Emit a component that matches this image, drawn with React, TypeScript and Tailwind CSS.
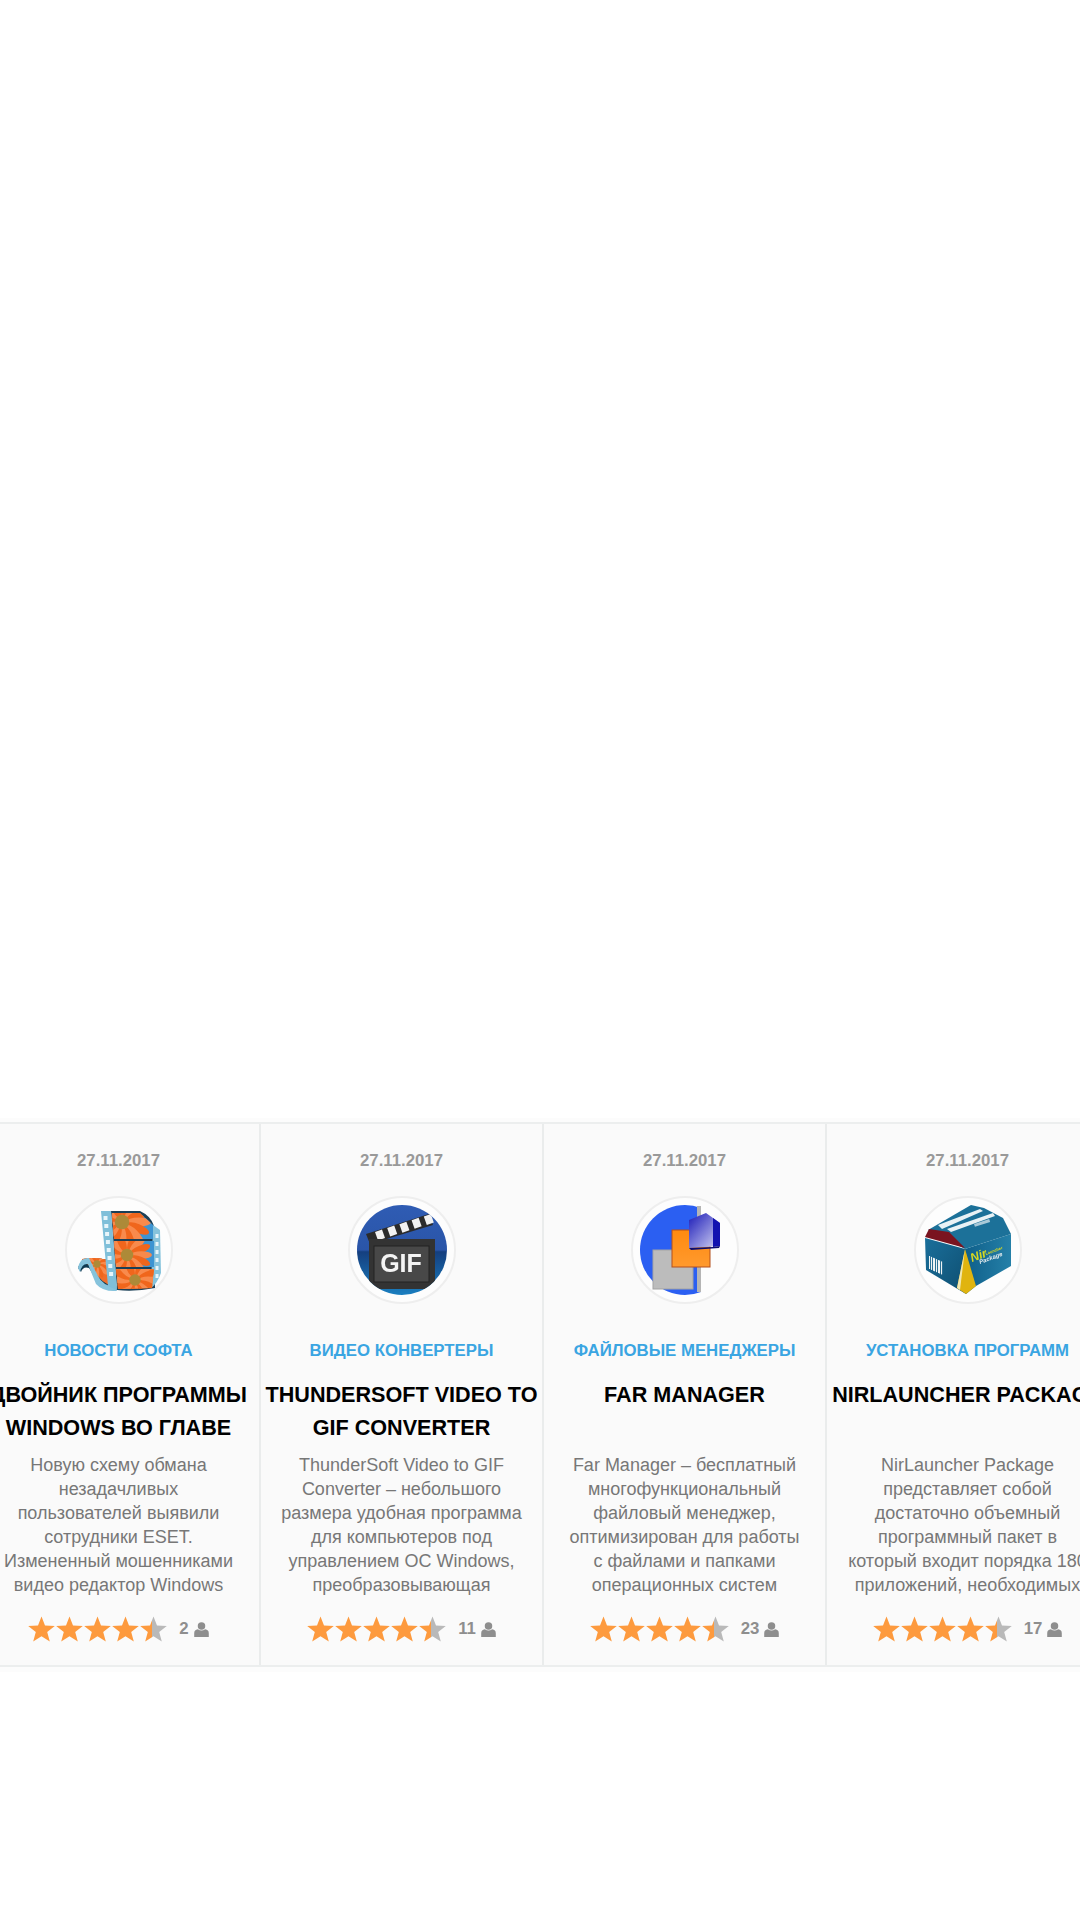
import React from "react";

function Flower({ cx, cy, r }: { cx: number; cy: number; r: number }) {
  const petals = Array.from({ length: 16 }, (_, i) => (i * 360) / 16);
  return (
    <g>
      <circle cx={cx} cy={cy} r={r * 0.72} fill="#ee651c" />
      {petals.map((a, i) => (
        <ellipse key={a} cx={cx} cy={cy - r * 0.6} rx={r * 0.16} ry={r * 0.44} fill={i % 2 ? "#f0661c" : "#f88a4c"} transform={`rotate(${a} ${cx} ${cy})`} />
      ))}
      <circle cx={cx} cy={cy} r={r * 0.26} fill="#ad8a38" />
    </g>
  );
}

function FilmIcon() {
  return (
    <svg viewBox="0 0 108 108" className="h-full w-full">
      <defs>
        <clipPath id="f1"><polygon points="47,17 75,17 88,29 88,43 49,43" /></clipPath>
        <clipPath id="f2"><polygon points="49,45 89,45 89,71 51,71" /></clipPath>
        <clipPath id="f3"><polygon points="51,73 89,73 87,92 53,93" /></clipPath>
        <clipPath id="filmLow">
          <path d="M17 63 Q30 60 46 65 L50 91 Q36 88 29 74 Q24 66 17 68 Z" />
        </clipPath>
      </defs>
      <path d="M46 15 L75 15 Q86 20 89 30 L90 92 Q70 96 52 94 Z" fill="#1a3f56" />
      <path d="M13 72 Q16 62 30 62 L46 64 L52 94 Q38 95 33 88 Q28 78 24 72 Q18 70 16 76 Z" fill="#0f3a52" />
      <g clipPath="url(#filmLow)">
        <rect x="10" y="58" width="45" height="40" fill="#ef6d2a" />
        <Flower cx={32} cy={68} r={14} />
      </g>
      <path d="M13 72 Q15 61 24 62 Q28 70 33 80 Q38 90 50 91 L52 95 Q38 96 31 88 Q26 76 23 68 Q17 67 15 76 Z" fill="#86c3dc" />
      <path d="M88 29 L95 34 L96 77 Q92 88 86 92 Z" fill="#86c3dc" />
      <g clipPath="url(#f1)">
        <rect x="45" y="16" width="46" height="30" fill="#3d94d2" />
        <Flower cx={57} cy={26} r={28} />
      </g>
      <g clipPath="url(#f2)">
        <rect x="45" y="44" width="46" height="30" fill="#3d94d2" />
        <Flower cx={62} cy={59} r={24} />
      </g>
      <g clipPath="url(#f3)">
        <rect x="45" y="72" width="46" height="24" fill="#ee7a30" />
        <Flower cx={70} cy={84} r={22} />
      </g>
      <path d="M36 15 L46 15 L52 94 L43 90 Z" fill="#7fbfd9" />
      {[20, 28, 36, 44, 52, 60, 68, 76].map((y, i) => (
        <rect key={y} x={38.5 + i * 0.8} y={y} width="4" height="4" fill="#e8f5fa" />
      ))}
      {[38, 46, 54, 62, 70, 78].map((y) => (
        <rect key={y} x="90.5" y={y} width="3" height="4" fill="#e8f5fa" />
      ))}
    </svg>
  );
}

function GifIcon() {
  return (
    <svg viewBox="0 0 108 108" className="h-full w-full">
      <defs>
        <linearGradient id="gifBg" x1="0" y1="0" x2="0" y2="1">
          <stop offset="0%" stopColor="#2f5cb4" />
          <stop offset="50%" stopColor="#2a55a8" />
          <stop offset="52%" stopColor="#153f7f" />
          <stop offset="100%" stopColor="#1a7fc0" />
        </linearGradient>
        <clipPath id="gifClip">
          <circle cx="54" cy="54" r="45" />
        </clipPath>
      </defs>
      <circle cx="54" cy="54" r="45" fill="url(#gifBg)" />
      <g clipPath="url(#gifClip)">
        <polygon points="18,38 81,18 85,29 22,48" fill="#2b2b2b" />
        {[0, 1, 2, 3, 4].map((i) => (
          <polygon key={i} points={`${27 + i * 12.2},${36 - i * 3.9} ${34 + i * 12.2},${33.5 - i * 3.9} ${37 + i * 12.2},${42 - i * 3.9} ${30 + i * 12.2},${44.5 - i * 3.9}`} fill="#f2f2f2" />
        ))}
        <rect x="21" y="43" width="66" height="50" fill="#333333" />
        <rect x="26" y="50" width="55" height="36" fill="#484848" stroke="#222222" strokeWidth="1" />
      </g>
      <text x="53" y="76" textAnchor="middle" fontFamily="Liberation Sans" fontWeight="700" fontSize="25" fill="#f4f4f4">GIF</text>
    </svg>
  );
}

function FarIcon() {
  return (
    <svg viewBox="0 0 108 108" className="h-full w-full">
      <defs>
        <clipPath id="farClip">
          <rect x="0" y="0" width="70" height="108" />
        </clipPath>
        <linearGradient id="farOrange" x1="0" y1="0" x2="0" y2="1">
          <stop offset="0%" stopColor="#ff8a10" />
          <stop offset="100%" stopColor="#ff9a2e" />
        </linearGradient>
        <linearGradient id="farCube" x1="0" y1="0" x2="1" y2="1">
          <stop offset="0%" stopColor="#1a1ab8" />
          <stop offset="100%" stopColor="#d8d8f5" />
        </linearGradient>
      </defs>
      <g clipPath="url(#farClip)">
        <circle cx="54" cy="54" r="45" fill="#2b5ff2" />
        <rect x="66" y="10" width="5" height="86" fill="#b5b5b5" />
      </g>
      <rect x="22" y="54" width="40" height="39" fill="#bcbcbc" stroke="#a3a3a3" strokeWidth="1" />
      <rect x="41" y="34" width="38" height="37" fill="url(#farOrange)" stroke="#b4501c" strokeWidth="1" />
      <polygon points="58,24 75,17 89,27 89,50 58,52" fill="url(#farCube)" />
      <polygon points="82,22 89,27 89,50 82,51" fill="#1212b0" />
      <polygon points="58,52 82,51 89,50 88,52 60,54" fill="#0c0c70" />
    </svg>
  );
}

function BoxIcon() {
  return (
    <svg viewBox="0 0 108 108" className="h-full w-full">
      <defs>
        <linearGradient id="boxL" x1="0" y1="0" x2="1" y2="1">
          <stop offset="0%" stopColor="#1a6f9b" />
          <stop offset="100%" stopColor="#0e4e70" />
        </linearGradient>
        <linearGradient id="boxR" x1="0" y1="0" x2="1" y2="0">
          <stop offset="0%" stopColor="#0f5f8a" />
          <stop offset="100%" stopColor="#2580a8" />
        </linearGradient>
      </defs>
      <polygon points="51,53 97,38 97,70 62,90 52,98" fill="url(#boxR)" />
      <polygon points="14,34 57,9 70,12 89,22 97,38 51,53" fill="#1c7199" />
      <polygon points="11,42 51,53 52,98 12,74" fill="url(#boxL)" />
      <polygon points="15,33 35,36 51,52 11,41" fill="#7a1420" />
      <polygon points="24,29 66,13 69,15 28,33" fill="#e9f2f5" />
      <polygon points="33,33 79,17 81,20 37,36" fill="#e9f2f5" />
      <polygon points="51,53 43,92 52,98 62,90" fill="#e0b40f" />
      <polygon points="51,53 43,92 46,94" fill="#f1e7b0" />
      <g fill="#eef3f4">
        {[0, 2, 4, 5, 7, 9, 10, 12].map((x) => (
          <rect key={x} x={15 + x} y={60 + x * 0.45} width="1.1" height="13" />
        ))}
      </g>
      <text x="58" y="66" fontFamily="Liberation Sans" fontWeight="700" fontStyle="italic" fontSize="12" fill="#d8d820" transform="rotate(-20 58 66)">Nir</text>
      <text x="72" y="59" fontFamily="Liberation Sans" fontWeight="700" fontSize="4" fill="#d8d820" transform="rotate(-20 72 59)">Launcher</text>
      <text x="66" y="68" fontFamily="Liberation Sans" fontWeight="700" fontStyle="italic" fontSize="6" fill="#e8eef0" transform="rotate(-20 66 68)">Package</text>
      <rect x="60" y="28" width="16" height="3" fill="#a9c9d8" transform="rotate(-18 60 28)" />
    </svg>
  );
}

function Stars({ uid }: { uid: string }) {
  const p = "13.5,0.5 17,9.4 26.8,9.9 19.2,16 21.8,25.5 13.5,20.2 5.2,25.5 7.8,16 0.2,9.9 10,9.4";
  return (
    <div className="flex w-[139px]">
      {[0, 1, 2, 3, 4].map((i) => (
        <svg key={i} viewBox="0 0 27 26" className="h-[26px] w-[27px] shrink-0 [&:not(:first-child)]:ml-[1px]">
          {i === 4 && (
            <defs>
              <linearGradient id={uid}>
                <stop offset="46%" stopColor="#fd9a3e" />
                <stop offset="46%" stopColor="#b9b9b9" />
              </linearGradient>
            </defs>
          )}
          <polygon points={p} fill={i === 4 ? `url(#${uid})` : "#fd9a3e"} />
        </svg>
      ))}
    </div>
  );
}

function UserIcon() {
  return (
    <svg viewBox="0 0 14 14" className="h-[15px] w-[15px]">
      <circle cx="7" cy="3.8" r="3.5" fill="#8e8e8e" />
      <path d="M0.2 14 V10.4 Q0.2 7.2 3.6 6.8 Q7 9 10.4 6.8 Q13.8 7.2 13.8 10.4 V14 Z" fill="#8e8e8e" />
    </svg>
  );
}

const cards = [
  {
    cat: "Новости софта",
    title: ["ДВОЙНИК ПРОГРАММЫ", "WINDOWS ВО ГЛАВЕ"],
    desc: ["Новую схему обмана", "незадачливых", "пользователей выявили", "сотрудники ESET.", "Измененный мошенниками", "видео редактор Windows"],
    count: "2",
    Icon: FilmIcon,
  },
  {
    cat: "Видео конвертеры",
    title: ["THUNDERSOFT VIDEO TO", "GIF CONVERTER"],
    desc: ["ThunderSoft Video to GIF", "Converter – небольшого", "размера удобная программа", "для компьютеров под", "управлением ОС Windows,", "преобразовывающая"],
    count: "11",
    Icon: GifIcon,
  },
  {
    cat: "Файловые менеджеры",
    title: ["FAR MANAGER", "\u00a0"],
    desc: ["Far Manager – бесплатный", "многофункциональный", "файловый менеджер,", "оптимизирован для работы", "с файлами и папками", "операционных систем"],
    count: "23",
    Icon: FarIcon,
  },
  {
    cat: "Установка программ",
    title: ["NIRLAUNCHER PACKAGE", "\u00a0"],
    desc: ["NirLauncher Package", "представляет собой", "достаточно объемный", "программный пакет в", "который входит порядка 180", "приложений, необходимых"],
    count: "17",
    Icon: BoxIcon,
  },
];

export default function App() {
  return (
    <div className="h-[1920px] w-[1080px] overflow-hidden bg-white pt-[1118px] font-['Liberation_Sans',Arial,sans-serif]">
      <div className="bg-[#fcfcfc] pb-[5px] pt-[4px]">
        <div className="-ml-[22px] flex h-[545px] w-[1140px] border-y-2 border-[#eceeee] bg-[#fafafa]">
          {cards.map((c, i) => (
            <div key={i} className="flex h-full w-[283px] shrink-0 flex-col items-center border-r-2 border-[#eaecec] pt-[28px]">
              <div className="text-[16.8px] font-bold leading-[18px] text-[#999999]">27.11.2017</div>
              <div className="mt-[26px] h-[108px] w-[108px] rounded-full border-2 border-[#eeeeee] bg-[#fdfdfd]">
                <div className="-m-[2px] h-[108px] w-[108px] blur-[0.5px]">
                  <c.Icon />
                </div>
              </div>
              <div className="mt-[38px] text-[16.8px] font-bold uppercase leading-[18px] text-[#3aa5e2]">{c.cat}</div>
              <div className="mt-[18px] flex flex-col items-center text-[21.6px] font-bold leading-[33px] text-black">
                {c.title.map((t, j) => (
                  <div key={j} className="whitespace-nowrap">{t}</div>
                ))}
              </div>
              <div className="mt-[9px] flex flex-col items-center text-[18px] leading-[24px] text-[#777777]">
                {c.desc.map((t, j) => (
                  <div key={j} className="whitespace-nowrap">{t}</div>
                ))}
              </div>
              <div className="mt-[19px] flex items-center">
                <Stars uid={`half${i}`} />
                <span className="ml-[12px] text-[16.8px] font-bold text-[#8e8e8e]">{c.count}</span>
                <span className="ml-[5px]"><UserIcon /></span>
              </div>
            </div>
          ))}
        </div>
      </div>
    </div>
  );
}
